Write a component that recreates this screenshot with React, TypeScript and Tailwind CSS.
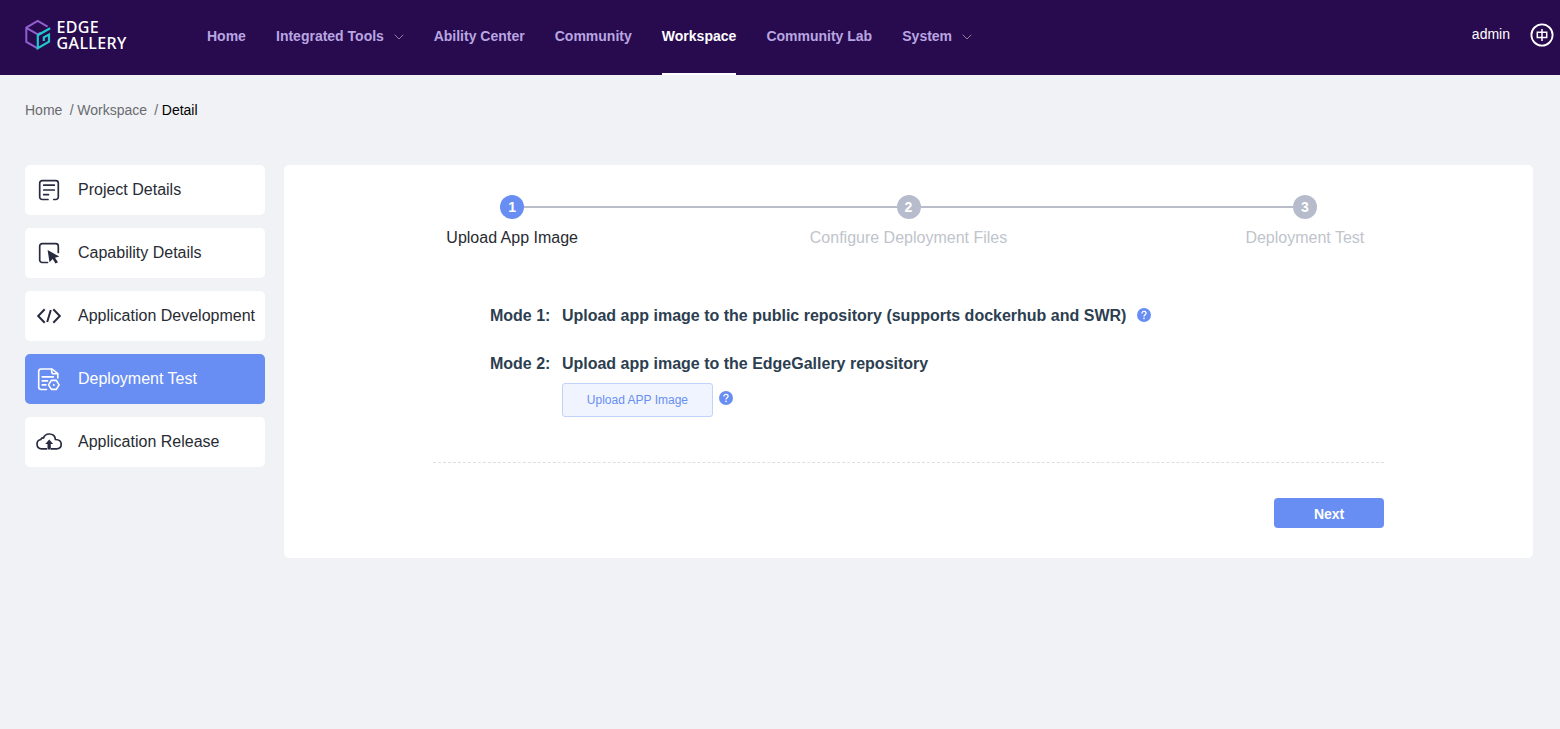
import React from 'react';

const navItems = [
  { label: 'Home' },
  { label: 'Integrated Tools', menu: true },
  { label: 'Ability Center' },
  { label: 'Community' },
  { label: 'Workspace', active: true },
  { label: 'Community Lab' },
  { label: 'System', menu: true },
];

const steps = ['Upload App Image', 'Configure Deployment Files', 'Deployment Test'];

function Logo() {
  return (
    <div className="flex w-[182px] shrink-0 items-start pt-[19px]">
      <svg width="27" height="31" viewBox="0 0 27 31" fill="none" strokeWidth="2" className="shrink-0">
        <path d="M22.6 7.6 12.7 2 1.3 8.6v14.2l11.4 6.6M1.3 8.8l11.4 6.6 3.2-1.9" stroke="#9160cf" />
        <path d="M25.2 9.2 12.8 16.2v13l11.2-6.5v-7.2l-5.2 2.9v3.6" stroke="#1fc8cd" strokeWidth="2.2" />
      </svg>
      <div className="ml-[4.5px] font-['Noto_Sans',sans-serif] text-[16px] leading-[16px] font-medium text-white">
        <div className="tracking-[0.3px]">EDGE</div>
        <div className="tracking-[0.4px]">GALLERY</div>
      </div>
    </div>
  );
}

function ChevronDown() {
  return (
    <svg width="10" height="6" viewBox="0 0 10 6" fill="none" stroke="#8c7f9f" className="mt-[2px] ml-[9.7px]">
      <path d="M0.7 0.7 5 5 9.3 0.7" />
    </svg>
  );
}

function Help() {
  return (
    <svg width="14" height="14" viewBox="0 0 14 14" fill="none" className="shrink-0">
      <circle cx="7" cy="7" r="7" fill="#688ef3" />
      <path d="M4.9 5.4c0-1.3.9-2.1 2.1-2.1s2.1.8 2.1 1.9c0 1.4-2.1 1.6-2.1 3.2" stroke="#fff" strokeWidth="1.3" />
      <circle cx="7" cy="10.3" r=".85" fill="#fff" />
    </svg>
  );
}

const iconClass = 'shrink-0';

const ProjectIcon = () => (
  <svg width="28" height="28" viewBox="0 0 28 28" fill="none" stroke="#282b40" strokeWidth="1.7" strokeLinecap="round" className={iconClass}>
    <path d="M13 23.5H7.2a2.5 2.5 0 0 1-2.5-2.5V7.2a2.5 2.5 0 0 1 2.5-2.5h13.6a2.5 2.5 0 0 1 2.5 2.5V21a2.5 2.5 0 0 1-2.5 2.5h-2" />
    <path d="M8.7 9.2h10.6M8.7 14h10.6M8.7 18.7h4.8" />
  </svg>
);

const CapabilityIcon = () => (
  <svg width="28" height="28" viewBox="0 0 28 28" fill="none" stroke="#282b40" strokeWidth="1.7" strokeLinecap="round" className={iconClass}>
    <path d="M12.5 23.5H7.2a2.5 2.5 0 0 1-2.5-2.5V7.2a2.5 2.5 0 0 1 2.5-2.5h13.6a2.5 2.5 0 0 1 2.5 2.5v6.3" />
    <path d="m12.6 11 11.7 6.6-4.3 1.2 3 4.4-2.5 1.3-2.8-4.4-3.2 3.2Z" fill="#282b40" stroke="none" />
  </svg>
);

const CodeIcon = () => (
  <svg width="28" height="28" viewBox="0 0 28 28" fill="none" stroke="#282b40" strokeWidth="2" className={iconClass}>
    <path d="M9.7 7.3 3.2 14l6.5 6.7M18.3 7.3l6.5 6.7-6.5 6.7M15.8 8l-3.6 12" />
  </svg>
);

const DeployIcon = () => (
  <svg width="28" height="28" viewBox="0 0 28 28" fill="none" stroke="#fff" strokeWidth="1.6" strokeLinecap="round" strokeLinejoin="round" className={iconClass}>
    <path d="M11.5 24.5H6.2a2.5 2.5 0 0 1-2.5-2.5V6.5a2.5 2.5 0 0 1 2.5-2.5h10.8l5.8 4.7v4.3" />
    <path d="M16.7 4.3v2.4c0 1.2.8 2 2 2h3.9M7.2 11.9h11.2M7.2 15.9h5.3M7.2 19.9h3.7" />
    <path d="m16.3 15.4h5l2.8 4.5-2.8 4.5h-5l-2.8-4.5Z" />
    <circle cx="18.8" cy="19.9" r="1" fill="#fff" stroke="none" />
  </svg>
);

const CloudIcon = () => (
  <svg width="28" height="28" viewBox="0 0 28 28" fill="none" stroke="#282b40" strokeWidth="1.7" className={iconClass}>
    <path d="M12 20.8H6.5a4.7 4.7 0 0 1-.7-9.3C6.3 10.2 7.3 9.7 8.5 10c.8-2.5 3-4 5.7-4 3.5 0 6 2.2 6.2 5.5 3.4.1 5.8 2 5.8 4.7 0 2.8-2 4.6-4.7 4.6H16" />
    <path d="m14.2 11.5 3.9 4.5h-2.3v5.5h-3.3V16h-2.2Z" fill="#282b40" stroke="none" />
  </svg>
);

const sideItems = [
  { label: 'Project Details', Icon: ProjectIcon },
  { label: 'Capability Details', Icon: CapabilityIcon },
  { label: 'Application Development', Icon: CodeIcon },
  { label: 'Deployment Test', Icon: DeployIcon, active: true },
  { label: 'Application Release', Icon: CloudIcon },
];

export default function App() {
  return (
    <div className="min-h-screen bg-[#f0f2f6] font-['Liberation_Sans',Arial,sans-serif] text-[#2c3e50]">
      <header className="flex h-[75px] bg-[#280b4e] pl-[25px]">
        <Logo />
        <nav className="flex gap-[30.1px] text-[14px] font-bold text-[#b8a6e2]">
          {navItems.map((item) => (
            <a
              key={item.label}
              className={
                item.active
                  ? 'flex h-[75px] items-center border-b-2 border-white pb-px text-white'
                  : 'flex h-[75px] items-center pb-[3px]'
              }
            >
              {item.label}
              {item.menu && <ChevronDown />}
            </a>
          ))}
        </nav>
        <div className="ml-auto flex h-[68px] items-center pr-[6.5px] text-[14px] text-white">
          admin
          <svg width="24" height="24" viewBox="0 0 24 24" fill="none" stroke="#fff" className="ml-[19.5px] mt-px">
            <circle cx="12" cy="12" r="10.6" strokeWidth="1.8" />
            <path d="M7.3 9.3h9.4v5.2H7.3ZM12 6v12" strokeWidth="1.5" />
          </svg>
        </div>
      </header>

      <div className="flex h-[90px] items-start pt-[27px] pl-[25px] text-[14px] leading-[16px] text-[#6b6b6f]">
        <span>Home</span>
        <span className="ml-[7.5px]">/</span>
        <span className="ml-[3.6px]">Workspace</span>
        <span className="ml-[7.2px]">/</span>
        <span className="ml-[3.6px] text-black">Detail</span>
      </div>

      <div className="flex items-start gap-[19px] pr-[27px] pl-[25px]">
        <aside className="flex w-[240px] shrink-0 flex-col gap-[13px]">
          {sideItems.map(({ label, Icon, active }) => (
            <a
              key={label}
              className={
                active
                  ? 'flex h-[50px] items-center rounded-[5px] bg-[#688ef3] pl-[10px] text-[16px] text-white'
                  : 'flex h-[50px] items-center rounded-[5px] bg-white pl-[10px] text-[16px] text-[#282b33]'
              }
            >
              <Icon />
              <span className="ml-[15px] pb-px whitespace-nowrap">{label}</span>
            </a>
          ))}
        </aside>

        <main className="h-[393px] flex-1 rounded-[5px] bg-white px-[30px] pt-[30px]">
          <ol className="flex">
            {steps.map((label, i) => (
              <li key={label} className="flex flex-1 flex-col items-center">
                <div className="flex w-full items-center">
                  <span className={i > 0 ? 'h-[2px] flex-1 bg-[#b9bdc9]' : 'h-[2px] flex-1'} />
                  <span
                    className={
                      i === 0
                        ? 'flex size-6 items-center justify-center rounded-full bg-[#688ef3] text-[14px] font-bold text-white'
                        : 'flex size-6 items-center justify-center rounded-full bg-[#b6bccb] text-[14px] font-bold text-white'
                    }
                  >
                    {i + 1}
                  </span>
                  <span className={i < 2 ? 'h-[2px] flex-1 bg-[#b9bdc9]' : 'h-[2px] flex-1'} />
                </div>
                <span
                  className={
                    i === 0
                      ? 'mt-[7px] text-[16px] leading-[24px] text-[#282b33]'
                      : 'mt-[7px] text-[16px] leading-[24px] text-[#c0c4cc]'
                  }
                >
                  {label}
                </span>
              </li>
            ))}
          </ol>

          <div className="mx-auto w-4/5">
            <div className="h-[213px] border-b border-dashed border-[#dfdfdf] pt-[54px] pl-[57px] text-[16px] leading-[24px] font-bold">
              <div className="flex items-start">
                <span className="w-[72px]">Mode 1:</span>
                <span className="mr-[10.5px]">Upload app image to the public repository (supports dockerhub and SWR)</span>
                <span className="mt-[4px] flex">
                  <Help />
                </span>
              </div>
              <div className="mt-[24px] flex items-start">
                <span className="w-[72px]">Mode 2:</span>
                <div>
                  <div>Upload app image to the EdgeGallery repository</div>
                  <div className="mt-[7px] flex items-start">
                    <button className="h-[34px] w-[151px] rounded-[3px] border border-[#c3d2fa] bg-[#f0f4fe] text-[12px] font-normal text-[#688ef3]">
                      Upload APP Image
                    </button>
                    <span className="mt-[8px] ml-[6.5px]">
                      <Help />
                    </span>
                  </div>
                </div>
              </div>
            </div>
            <div className="mt-[35px] flex justify-end">
              <button className="h-[30px] w-[110px] rounded-[4px] bg-[#688ef3] pt-[2px] text-[14px] font-bold text-white">
                Next
              </button>
            </div>
          </div>
        </main>
      </div>
    </div>
  );
}
